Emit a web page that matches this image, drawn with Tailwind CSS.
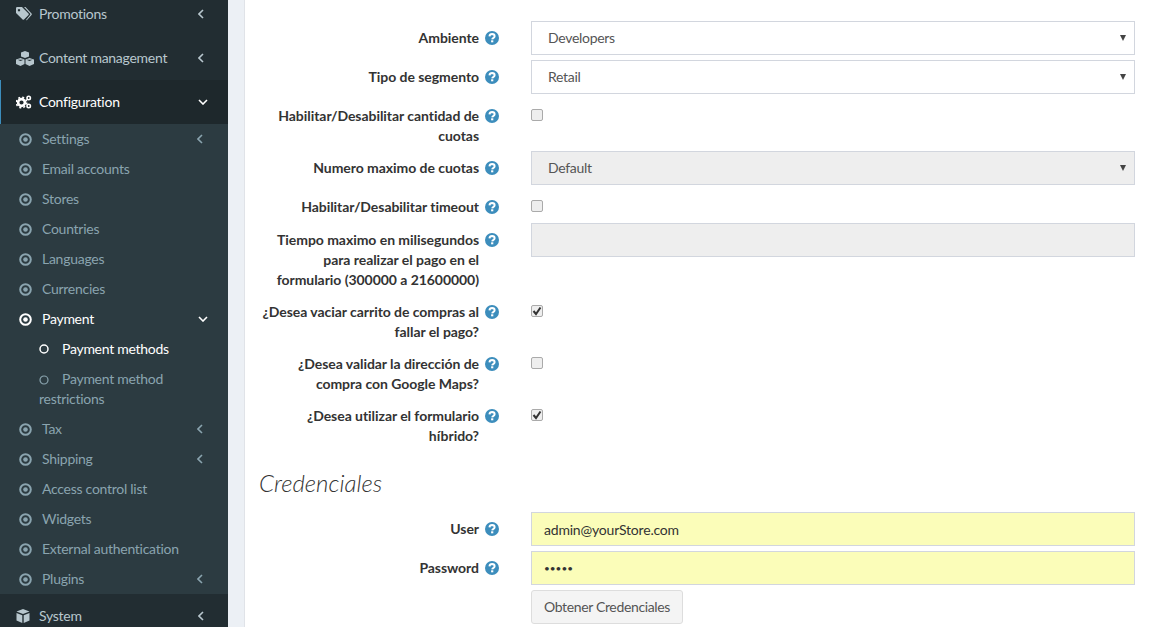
<!DOCTYPE html>
<html lang="en">
<head>
    <meta charset="UTF-8">
    <title>Payment method configuration</title>
    <script src="https://cdn.jsdelivr.net/npm/@tailwindcss/browser@4"></script>
</head>
<body class="h-[627px] overflow-hidden bg-white font-['Lato',sans-serif] text-[14px] leading-[20px] text-[#333]">
<div class="flex h-[627px] overflow-hidden">

    <!-- Sidebar -->
    <aside class="w-[228px] shrink-0 -mt-[8px] bg-[#222d32] text-[#b8c7ce] tracking-[-0.27px]">
        <div class="h-[44px] flex items-center pl-[16px] pr-[24px]">
            <svg class="w-[16px] h-[14px] mr-[7px]" viewBox="0 0 16 14" fill="#b8c7ce"><path d="M0 1.200Q0 0 1.200 0H6l6.500 6.500q.7.7 0 1.400L8 12.500q-.7.7-1.400 0L0 6ZM3 2a1.200 1.200 0 1 0 .01 0Z"/><path d="M8 0h1.500l6 6.500q.7.7 0 1.400L11 13q-.5.4-1 .1L14 8q.6-.8 0-1.500Z"/></svg>
            <span>Promotions</span>
            <svg class="ml-auto w-[6px] h-[10px]" viewBox="0 0 6 10" fill="none" stroke="#b8c7ce" stroke-width="1.600"><path d="M5 1 1 5l4 4"/></svg>
        </div>
        <div class="h-[44px] flex items-center pl-[16px] pr-[24px]">
            <svg class="w-[18px] h-[15px] mr-[5px]" viewBox="0 0 18 15" fill="#b8c7ce"><path d="M9 0l4 1.500v4L9 7 5 5.500v-4ZM4.500 7l4 1.500v4.500l-4 2-4.500-2V8.500ZM13.500 7l4.500 1.500v4.500l-4.500 2-4-2V8.500Z"/><path d="M5 8.800l-3.500-.1 3 1.200 3-1.100ZM14 8.800l-3.500-.1 3 1.200 3-1.100Z" fill="#222d32"/></svg>
            <span>Content management</span>
            <svg class="ml-auto w-[6px] h-[10px]" viewBox="0 0 6 10" fill="none" stroke="#b8c7ce" stroke-width="1.600"><path d="M5 1 1 5l4 4"/></svg>
        </div>
        <div class="h-[44px] flex items-center pl-[15px] pr-[20px] bg-[#1e282c] border-l-[1px] border-[#3c8dbc] text-white">
            <svg class="w-[16px] h-[14px] mr-[7px]" viewBox="0 0 16 14"><circle cx="5.500" cy="7.500" r="3.400" fill="none" stroke="#fff" stroke-width="2.600"/><circle cx="5.500" cy="7.500" r="5.200" fill="none" stroke="#fff" stroke-width="1.600" stroke-dasharray="2 2.100"/><circle cx="12.700" cy="3" r="1.700" fill="none" stroke="#fff" stroke-width="1.600"/><circle cx="12.700" cy="11" r="1.700" fill="none" stroke="#fff" stroke-width="1.600"/></svg>
            <span>Configuration</span>
            <svg class="ml-auto w-[10px] h-[6px]" viewBox="0 0 10 6" fill="none" stroke="#fff" stroke-width="1.600"><path d="M1 1l4 4 4-4"/></svg>
        </div>
        <ul class="bg-[#2c3b41] text-[#8aa4af]">
            <li class="h-[30px] flex items-center pl-[19px] pr-[25px]"><svg class="w-[13px] h-[13px] mr-[10px]" viewBox="0 0 13 13"><circle cx="6.500" cy="6.500" r="5.300" fill="none" stroke="#8aa4af" stroke-width="2"/><circle cx="6.500" cy="6.500" r="2.300" fill="#8aa4af"/></svg><span>Settings</span><svg class="ml-auto w-[6px] h-[10px]" viewBox="0 0 6 10" fill="none" stroke="#8aa4af" stroke-width="1.600"><path d="M5 1 1 5l4 4"/></svg></li>
            <li class="h-[30px] flex items-center pl-[19px] pr-[25px]"><svg class="w-[13px] h-[13px] mr-[10px]" viewBox="0 0 13 13"><circle cx="6.500" cy="6.500" r="5.300" fill="none" stroke="#8aa4af" stroke-width="2"/><circle cx="6.500" cy="6.500" r="2.300" fill="#8aa4af"/></svg><span>Email accounts</span></li>
            <li class="h-[30px] flex items-center pl-[19px] pr-[25px]"><svg class="w-[13px] h-[13px] mr-[10px]" viewBox="0 0 13 13"><circle cx="6.500" cy="6.500" r="5.300" fill="none" stroke="#8aa4af" stroke-width="2"/><circle cx="6.500" cy="6.500" r="2.300" fill="#8aa4af"/></svg><span>Stores</span></li>
            <li class="h-[30px] flex items-center pl-[19px] pr-[25px]"><svg class="w-[13px] h-[13px] mr-[10px]" viewBox="0 0 13 13"><circle cx="6.500" cy="6.500" r="5.300" fill="none" stroke="#8aa4af" stroke-width="2"/><circle cx="6.500" cy="6.500" r="2.300" fill="#8aa4af"/></svg><span>Countries</span></li>
            <li class="h-[30px] flex items-center pl-[19px] pr-[25px]"><svg class="w-[13px] h-[13px] mr-[10px]" viewBox="0 0 13 13"><circle cx="6.500" cy="6.500" r="5.300" fill="none" stroke="#8aa4af" stroke-width="2"/><circle cx="6.500" cy="6.500" r="2.300" fill="#8aa4af"/></svg><span>Languages</span></li>
            <li class="h-[30px] flex items-center pl-[19px] pr-[25px]"><svg class="w-[13px] h-[13px] mr-[10px]" viewBox="0 0 13 13"><circle cx="6.500" cy="6.500" r="5.300" fill="none" stroke="#8aa4af" stroke-width="2"/><circle cx="6.500" cy="6.500" r="2.300" fill="#8aa4af"/></svg><span>Currencies</span></li>
            <li class="h-[30px] flex items-center pl-[19px] pr-[20px] text-white"><svg class="w-[13px] h-[13px] mr-[10px]" viewBox="0 0 13 13"><circle cx="6.500" cy="6.500" r="5.300" fill="none" stroke="#fff" stroke-width="2"/><circle cx="6.500" cy="6.500" r="2.300" fill="#fff"/></svg><span>Payment</span><svg class="ml-auto w-[10px] h-[6px]" viewBox="0 0 10 6" fill="none" stroke="#fff" stroke-width="1.600"><path d="M1 1l4 4 4-4"/></svg></li>
            <li class="h-[30px] flex items-center pl-[39px] text-white"><svg class="w-[10px] h-[10px] mr-[13px]" viewBox="0 0 10 10"><circle cx="5" cy="5" r="4" fill="none" stroke="#fff" stroke-width="1.500"/></svg><span>Payment methods</span></li>
            <li class="h-[50px] pt-[5px] pl-[39px] pr-[8px]"><svg class="inline-block align-[-1px] w-[10px] h-[10px] mr-[13px]" viewBox="0 0 10 10"><circle cx="5" cy="5" r="4" fill="none" stroke="#8aa4af" stroke-width="1.200"/></svg>Payment method<br>restrictions</li>
            <li class="h-[30px] flex items-center pl-[19px] pr-[25px]"><svg class="w-[13px] h-[13px] mr-[10px]" viewBox="0 0 13 13"><circle cx="6.500" cy="6.500" r="5.300" fill="none" stroke="#8aa4af" stroke-width="2"/><circle cx="6.500" cy="6.500" r="2.300" fill="#8aa4af"/></svg><span>Tax</span><svg class="ml-auto w-[6px] h-[10px]" viewBox="0 0 6 10" fill="none" stroke="#8aa4af" stroke-width="1.600"><path d="M5 1 1 5l4 4"/></svg></li>
            <li class="h-[30px] flex items-center pl-[19px] pr-[25px]"><svg class="w-[13px] h-[13px] mr-[10px]" viewBox="0 0 13 13"><circle cx="6.500" cy="6.500" r="5.300" fill="none" stroke="#8aa4af" stroke-width="2"/><circle cx="6.500" cy="6.500" r="2.300" fill="#8aa4af"/></svg><span>Shipping</span><svg class="ml-auto w-[6px] h-[10px]" viewBox="0 0 6 10" fill="none" stroke="#8aa4af" stroke-width="1.600"><path d="M5 1 1 5l4 4"/></svg></li>
            <li class="h-[30px] flex items-center pl-[19px] pr-[25px]"><svg class="w-[13px] h-[13px] mr-[10px]" viewBox="0 0 13 13"><circle cx="6.500" cy="6.500" r="5.300" fill="none" stroke="#8aa4af" stroke-width="2"/><circle cx="6.500" cy="6.500" r="2.300" fill="#8aa4af"/></svg><span>Access control list</span></li>
            <li class="h-[30px] flex items-center pl-[19px] pr-[25px]"><svg class="w-[13px] h-[13px] mr-[10px]" viewBox="0 0 13 13"><circle cx="6.500" cy="6.500" r="5.300" fill="none" stroke="#8aa4af" stroke-width="2"/><circle cx="6.500" cy="6.500" r="2.300" fill="#8aa4af"/></svg><span>Widgets</span></li>
            <li class="h-[30px] flex items-center pl-[19px] pr-[25px]"><svg class="w-[13px] h-[13px] mr-[10px]" viewBox="0 0 13 13"><circle cx="6.500" cy="6.500" r="5.300" fill="none" stroke="#8aa4af" stroke-width="2"/><circle cx="6.500" cy="6.500" r="2.300" fill="#8aa4af"/></svg><span>External authentication</span></li>
            <li class="h-[30px] flex items-center pl-[19px] pr-[25px]"><svg class="w-[13px] h-[13px] mr-[10px]" viewBox="0 0 13 13"><circle cx="6.500" cy="6.500" r="5.300" fill="none" stroke="#8aa4af" stroke-width="2"/><circle cx="6.500" cy="6.500" r="2.300" fill="#8aa4af"/></svg><span>Plugins</span><svg class="ml-auto w-[6px] h-[10px]" viewBox="0 0 6 10" fill="none" stroke="#8aa4af" stroke-width="1.600"><path d="M5 1 1 5l4 4"/></svg></li>
        </ul>
        <div class="h-[44px] flex items-center pl-[16px] pr-[24px]">
            <svg class="w-[14px] h-[14px] mr-[9px]" viewBox="0 0 14 14" fill="#b8c7ce"><path d="M7 0l6.500 2.500L7 5 .5 2.500ZM.5 4 6.300 6.300V14L.5 11.500ZM13.500 4 7.700 6.300V14l5.800-2.500Z"/></svg>
            <span>System</span>
            <svg class="ml-auto w-[6px] h-[10px]" viewBox="0 0 6 10" fill="none" stroke="#b8c7ce" stroke-width="1.600"><path d="M5 1 1 5l4 4"/></svg>
        </div>
    </aside>

    <!-- Gutter -->
    <div class="w-[17px] shrink-0 bg-[#ecf0f5] border-r border-[#e0e3e8]"></div>

    <!-- Form -->
    <main class="flex-1 pt-[21px] pl-[14px] pr-[27px]">
        <div class="flex mb-[5px]">
            <label class="w-[220px] pt-[7px] text-right font-bold whitespace-nowrap tracking-[-0.05px]">Ambiente</label>
            <svg class="w-[14px] h-[14px] ml-[6px] mt-[10px]" viewBox="0 0 14 14"><circle cx="7" cy="7" r="7" fill="#3c8dbc"/><path d="M4.500 5.300Q4.700 3 7.100 3 9.600 3.100 9.600 5.200 9.600 6.400 8.200 7.100 7.300 7.600 7.200 8.400" fill="none" stroke="#fff" stroke-width="2"/><rect x="6.100" y="9.300" width="2.200" height="2" fill="#fff"/></svg>
            <div class="relative ml-[32px] flex-1">
                <select class="w-full h-[34px] appearance-none border border-[#d2d6de] bg-white pl-[16px] text-[#555] tracking-[-0.3px]"><option>Developers</option></select>
                <span class="absolute right-[9px] top-[14px] w-0 h-0 border-x-[3px] border-t-[6px] border-x-transparent border-t-[#444]"></span>
            </div>
        </div>
        <div class="flex mb-[5px]">
            <label class="w-[220px] pt-[7px] text-right font-bold whitespace-nowrap tracking-[-0.05px]">Tipo de segmento</label>
            <svg class="w-[14px] h-[14px] ml-[6px] mt-[10px]" viewBox="0 0 14 14"><circle cx="7" cy="7" r="7" fill="#3c8dbc"/><path d="M4.500 5.300Q4.700 3 7.100 3 9.600 3.100 9.600 5.200 9.600 6.400 8.200 7.100 7.300 7.600 7.200 8.400" fill="none" stroke="#fff" stroke-width="2"/><rect x="6.100" y="9.300" width="2.200" height="2" fill="#fff"/></svg>
            <div class="relative ml-[32px] flex-1">
                <select class="w-full h-[34px] appearance-none border border-[#d2d6de] bg-white pl-[16px] text-[#555] tracking-[-0.3px]"><option>Retail</option></select>
                <span class="absolute right-[9px] top-[14px] w-0 h-0 border-x-[3px] border-t-[6px] border-x-transparent border-t-[#444]"></span>
            </div>
        </div>
        <div class="flex mb-[5px]">
            <label class="w-[220px] pt-[7px] text-right font-bold whitespace-nowrap tracking-[-0.05px]">Habilitar/Desabilitar cantidad de<br>cuotas</label>
            <svg class="w-[14px] h-[14px] ml-[6px] mt-[10px]" viewBox="0 0 14 14"><circle cx="7" cy="7" r="7" fill="#3c8dbc"/><path d="M4.500 5.300Q4.700 3 7.100 3 9.600 3.100 9.600 5.200 9.600 6.400 8.200 7.100 7.300 7.600 7.200 8.400" fill="none" stroke="#fff" stroke-width="2"/><rect x="6.100" y="9.300" width="2.200" height="2" fill="#fff"/></svg>
            <span class="ml-[32px] mt-[10px] w-[12px] h-[12px] rounded-[2px] border border-[#aaa] bg-[#eee]"></span>
        </div>
        <div class="flex mb-[5px]">
            <label class="w-[220px] pt-[7px] text-right font-bold whitespace-nowrap tracking-[-0.05px]">Numero maximo de cuotas</label>
            <svg class="w-[14px] h-[14px] ml-[6px] mt-[10px]" viewBox="0 0 14 14"><circle cx="7" cy="7" r="7" fill="#3c8dbc"/><path d="M4.500 5.300Q4.700 3 7.100 3 9.600 3.100 9.600 5.200 9.600 6.400 8.200 7.100 7.300 7.600 7.200 8.400" fill="none" stroke="#fff" stroke-width="2"/><rect x="6.100" y="9.300" width="2.200" height="2" fill="#fff"/></svg>
            <div class="relative ml-[32px] flex-1">
                <select disabled class="w-full h-[34px] appearance-none border border-[#d2d6de] bg-[#eee] opacity-100 pl-[16px] text-[#555] tracking-[-0.3px]"><option>Default</option></select>
                <span class="absolute right-[9px] top-[14px] w-0 h-0 border-x-[3px] border-t-[6px] border-x-transparent border-t-[#444]"></span>
            </div>
        </div>
        <div class="flex h-[28px] mb-[5px]">
            <label class="w-[220px] pt-[7px] text-right font-bold whitespace-nowrap tracking-[-0.05px]">Habilitar/Desabilitar timeout</label>
            <svg class="w-[14px] h-[14px] ml-[6px] mt-[10px]" viewBox="0 0 14 14"><circle cx="7" cy="7" r="7" fill="#3c8dbc"/><path d="M4.500 5.300Q4.700 3 7.100 3 9.600 3.100 9.600 5.200 9.600 6.400 8.200 7.100 7.300 7.600 7.200 8.400" fill="none" stroke="#fff" stroke-width="2"/><rect x="6.100" y="9.300" width="2.200" height="2" fill="#fff"/></svg>
            <span class="ml-[32px] mt-[10px] w-[12px] h-[12px] rounded-[2px] border border-[#aaa] bg-[#eee]"></span>
        </div>
        <div class="flex mb-[5px]">
            <label class="w-[220px] pt-[7px] text-right font-bold whitespace-nowrap tracking-[-0.05px]">Tiempo maximo en milisegundos<br>para realizar el pago en el<br>formulario (300000 a 21600000)</label>
            <svg class="w-[14px] h-[14px] ml-[6px] mt-[10px]" viewBox="0 0 14 14"><circle cx="7" cy="7" r="7" fill="#3c8dbc"/><path d="M4.500 5.300Q4.700 3 7.100 3 9.600 3.100 9.600 5.200 9.600 6.400 8.200 7.100 7.300 7.600 7.200 8.400" fill="none" stroke="#fff" stroke-width="2"/><rect x="6.100" y="9.300" width="2.200" height="2" fill="#fff"/></svg>
            <div class="ml-[32px] flex-1"><input disabled class="block w-full h-[34px] border border-[#d2d6de] bg-[#eee]"></div>
        </div>
        <div class="flex mb-[5px]">
            <label class="w-[220px] pt-[7px] text-right font-bold whitespace-nowrap tracking-[-0.05px]">¿Desea vaciar carrito de compras al<br>fallar el pago?</label>
            <svg class="w-[14px] h-[14px] ml-[6px] mt-[10px]" viewBox="0 0 14 14"><circle cx="7" cy="7" r="7" fill="#3c8dbc"/><path d="M4.500 5.300Q4.700 3 7.100 3 9.600 3.100 9.600 5.200 9.600 6.400 8.200 7.100 7.300 7.600 7.200 8.400" fill="none" stroke="#fff" stroke-width="2"/><rect x="6.100" y="9.300" width="2.200" height="2" fill="#fff"/></svg>
            <span class="ml-[32px] mt-[10px] w-[12px] h-[12px] rounded-[2px] border border-[#aaa] bg-[#eee] flex items-center justify-center"><svg class="w-[10px] h-[10px]" viewBox="0 0 10 10" fill="none" stroke="#333" stroke-width="2"><path d="M1.500 5 4 8l4.500-6.500"/></svg></span>
        </div>
        <div class="flex mb-[5px]">
            <label class="w-[220px] pt-[7px] text-right font-bold whitespace-nowrap tracking-[-0.05px]">¿Desea validar la dirección de<br>compra con Google Maps?</label>
            <svg class="w-[14px] h-[14px] ml-[6px] mt-[10px]" viewBox="0 0 14 14"><circle cx="7" cy="7" r="7" fill="#3c8dbc"/><path d="M4.500 5.300Q4.700 3 7.100 3 9.600 3.100 9.600 5.200 9.600 6.400 8.200 7.100 7.300 7.600 7.200 8.400" fill="none" stroke="#fff" stroke-width="2"/><rect x="6.100" y="9.300" width="2.200" height="2" fill="#fff"/></svg>
            <span class="ml-[32px] mt-[10px] w-[12px] h-[12px] rounded-[2px] border border-[#aaa] bg-[#eee]"></span>
        </div>
        <div class="flex">
            <label class="w-[220px] pt-[7px] text-right font-bold whitespace-nowrap tracking-[-0.05px]">¿Desea utilizar el formulario<br>híbrido?</label>
            <svg class="w-[14px] h-[14px] ml-[6px] mt-[10px]" viewBox="0 0 14 14"><circle cx="7" cy="7" r="7" fill="#3c8dbc"/><path d="M4.500 5.300Q4.700 3 7.100 3 9.600 3.100 9.600 5.200 9.600 6.400 8.200 7.100 7.300 7.600 7.200 8.400" fill="none" stroke="#fff" stroke-width="2"/><rect x="6.100" y="9.300" width="2.200" height="2" fill="#fff"/></svg>
            <span class="ml-[32px] mt-[10px] w-[12px] h-[12px] rounded-[2px] border border-[#aaa] bg-[#eee] flex items-center justify-center"><svg class="w-[10px] h-[10px]" viewBox="0 0 10 10" fill="none" stroke="#333" stroke-width="2"><path d="M1.500 5 4 8l4.500-6.500"/></svg></span>
        </div>

        <h4 class="mt-[22px] mb-[14px] h-[30px] text-[24px] leading-[30px] italic font-light">Credenciales</h4>

        <div class="flex mb-[5px]">
            <label class="w-[220px] pt-[7px] text-right font-bold whitespace-nowrap tracking-[-0.05px]">User</label>
            <svg class="w-[14px] h-[14px] ml-[6px] mt-[10px]" viewBox="0 0 14 14"><circle cx="7" cy="7" r="7" fill="#3c8dbc"/><path d="M4.500 5.300Q4.700 3 7.100 3 9.600 3.100 9.600 5.200 9.600 6.400 8.200 7.100 7.300 7.600 7.200 8.400" fill="none" stroke="#fff" stroke-width="2"/><rect x="6.100" y="9.300" width="2.200" height="2" fill="#fff"/></svg>
            <div class="ml-[32px] flex-1"><input value="admin@yourStore.com" class="block w-full h-[34px] border border-[#d2d6de] bg-[#fbfdb9] px-[12px] text-[#333] tracking-[-0.2px]"></div>
        </div>
        <div class="flex mb-[5px]">
            <label class="w-[220px] pt-[7px] text-right font-bold whitespace-nowrap tracking-[-0.05px]">Password</label>
            <svg class="w-[14px] h-[14px] ml-[6px] mt-[10px]" viewBox="0 0 14 14"><circle cx="7" cy="7" r="7" fill="#3c8dbc"/><path d="M4.500 5.300Q4.700 3 7.100 3 9.600 3.100 9.600 5.200 9.600 6.400 8.200 7.100 7.300 7.600 7.200 8.400" fill="none" stroke="#fff" stroke-width="2"/><rect x="6.100" y="9.300" width="2.200" height="2" fill="#fff"/></svg>
            <div class="ml-[32px] flex-1"><input type="password" value="admin" class="block w-full h-[34px] border border-[#d2d6de] bg-[#fbfdb9] px-[12px] text-[10px] text-[#333]"></div>
        </div>
        <div class="pl-[272px]">
            <button class="h-[34px] w-[152px] rounded-[3px] border border-[#ddd] bg-[#f4f4f4] text-[#555] whitespace-nowrap tracking-[-0.35px]">Obtener Credenciales</button>
        </div>
    </main>
</div>
</body>
</html>
